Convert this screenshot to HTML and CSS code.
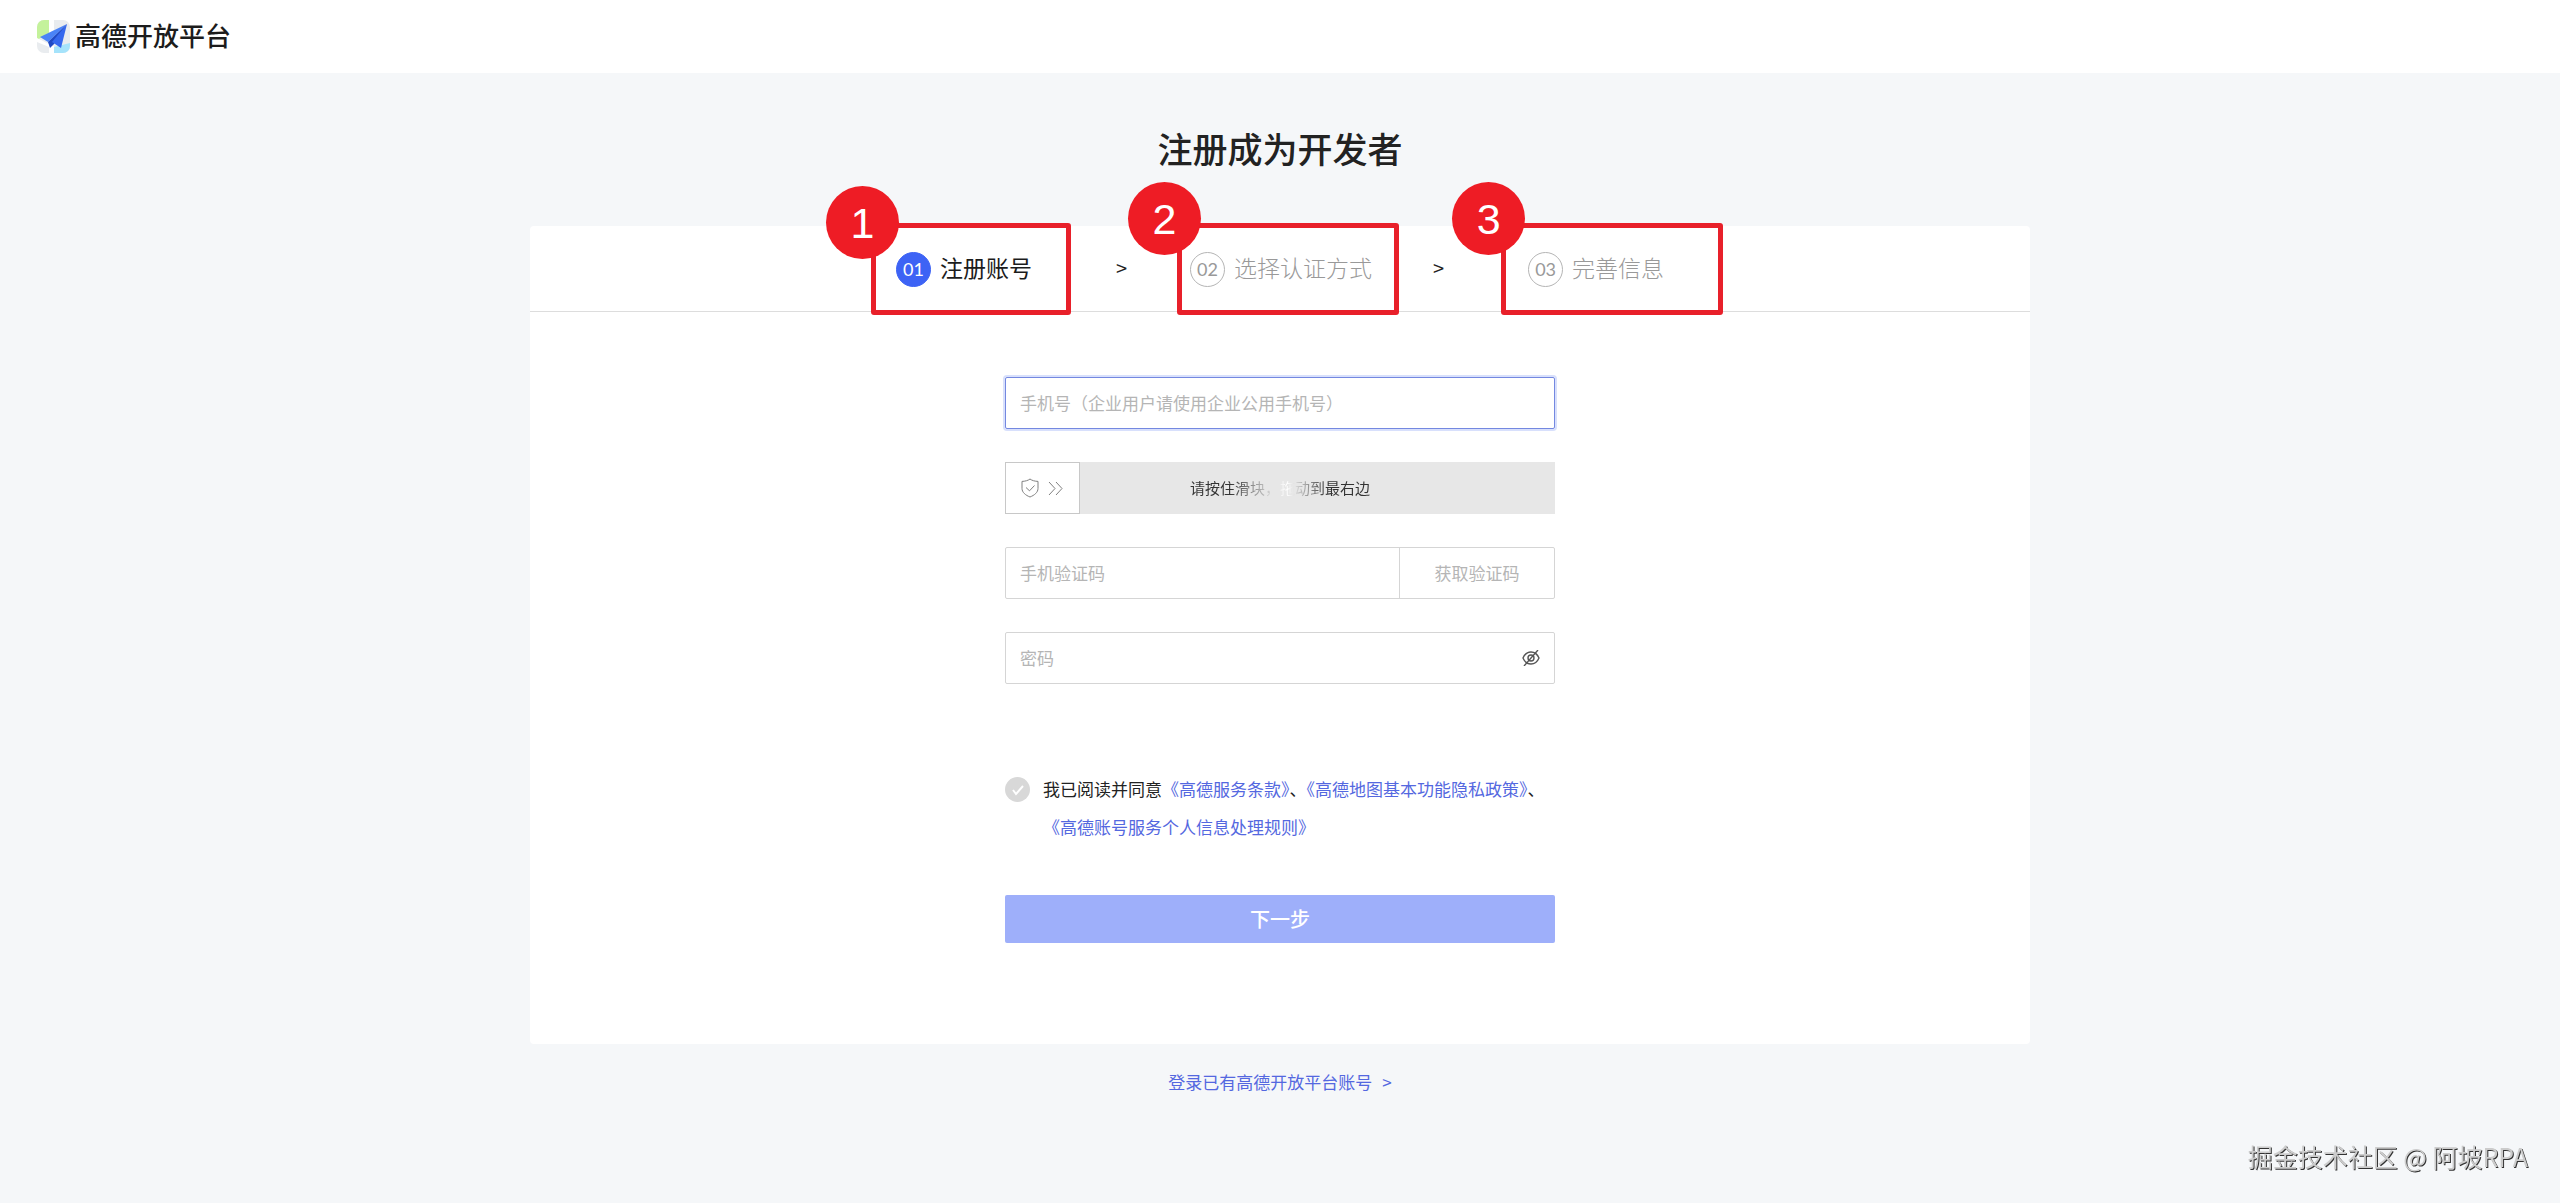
FILE: index.html
```html
<!DOCTYPE html>
<html lang="zh-CN">
<head>
    <meta charset="UTF-8">
    <meta name="viewport" content="width=device-width, initial-scale=1.0">
    <title>注册成为开发者 - 高德开放平台</title>
    <link rel="stylesheet" href="styles.css">
</head>
<body>
    <header class="header">
        <a class="logo" href="#">
            <svg width="33" height="33" viewBox="0 0 33 33" aria-hidden="true">
                <defs>
                    <clipPath id="tile"><rect width="33" height="33" rx="7"/></clipPath>
                </defs>
                <g clip-path="url(#tile)">
                    <rect width="33" height="33" fill="#e9ecef"/>
                    <path d="M0 0h12v13L0 20z" fill="#c4f29b"/>
                    <path d="M17 33V27l16-4v10z" fill="#a5e3fb"/>
                    <path d="M12 0h5v10l-5 3zM0 18l10 5 7 3v7h-5v-6L0 22z" fill="#fff"/>
                </g>
                <path d="M30 4L3 17l8 5z" fill="#4a83f7"/>
                <path d="M30 4L11 22l2 6 4-4z" fill="#1f49c4"/>
                <path d="M30 4L15 22l9 6z" fill="#3568ee"/>
            </svg>
            <span>高德开放平台</span>
        </a>
    </header>

    <main class="main">
        <h1 class="title">注册成为开发者</h1>

        <section class="card">
            <ol class="steps">
                <li class="step active">
                    <span class="step-num">01</span>
                    <span class="step-name">注册账号</span>
                    <span class="mark mark-1"><b class="badge">1</b></span>
                </li>
                <li class="arrow arrow-first" aria-hidden="true">&gt;</li>
                <li class="step">
                    <span class="step-num">02</span>
                    <span class="step-name">选择认证方式</span>
                    <span class="mark mark-2"><b class="badge">2</b></span>
                </li>
                <li class="arrow arrow-last" aria-hidden="true">&gt;</li>
                <li class="step">
                    <span class="step-num">03</span>
                    <span class="step-name">完善信息</span>
                    <span class="mark mark-3"><b class="badge">3</b></span>
                </li>
            </ol>

            <form class="form">
                <div class="field focused">
                    <input type="tel" aria-label="手机号" placeholder="手机号（企业用户请使用企业公用手机号）">
                </div>

                <div class="slider">
                    <input type="range" id="slide" min="0" max="100" value="0">
                    <label class="slider-text" for="slide">请按住滑块，拖动到最右边</label>
                    <svg class="slider-icon" width="42" height="20" viewBox="0 0 42 20" fill="none" stroke="#808080" aria-hidden="true">
                        <path d="M9 1c2 1.600 5 2.300 8 2.400v7c0 4-3.500 6.800-8 8.600-4.500-1.800-8-4.600-8-8.600v-7C4 3.300 7 2.600 9 1z"/>
                        <path d="M5 9.500l3.500 3.300 5-5.300"/>
                        <path d="M28 4l6 6.500-6 6.500M35 4l6 6.500-6 6.500"/>
                    </svg>
                </div>

                <div class="field">
                    <input type="text" aria-label="手机验证码" placeholder="手机验证码">
                    <button class="code-btn" type="button" disabled>获取验证码</button>
                </div>

                <div class="field">
                    <input type="password" aria-label="密码" placeholder="密码">
                    <button class="eye-btn" type="button" aria-label="显示密码">
                        <svg width="18" height="16" viewBox="0 0 18 16" fill="none" stroke="#555" stroke-width="1.400">
                            <path d="M1 8c1.500-3.500 4.500-6 8-6s6.500 2.500 8 6c-1.500 3.500-4.500 6-8 6s-6.500-2.500-8-6z"/>
                            <circle cx="9" cy="8" r="3"/>
                            <path d="M16 0L2 16"/>
                        </svg>
                    </button>
                </div>

                <div class="agree">
                    <input type="checkbox" id="agree">
                    <svg class="tick" width="12" height="12" viewBox="0 0 12 12" fill="none" stroke="#fff" stroke-width="2" aria-hidden="true">
                        <path d="M1 6l3 4 7-8"/>
                    </svg>
                    <p><label for="agree">我已阅读并同意</label><a href="#">《高德服务条款》</a>、<a href="#">《高德地图基本功能隐私政策》</a>、<br><a href="#">《高德账号服务个人信息处理规则》</a></p>
                </div>

                <button class="submit" type="button">下一步</button>
            </form>
        </section>

        <a class="login" href="#"><span>登录已有高德开放平台账号</span><span>&gt;</span></a>
    </main>

    <div class="watermark">掘金技术社区 @ 阿坡RPA</div>
</body>
</html>
```
FILE: styles.css
```css
* {
    box-sizing: border-box;
}
body {
    margin: 0;
    min-height: 100vh;
    background: #f5f7f9;
    color: #222222;
    font-family: "Noto Sans CJK SC", sans-serif;
    font-size: 17px;
}
a {
    color: #5468e0;
    text-decoration: none;
}
input, button {
    font-family: inherit;
    font-size: inherit;
}

/* header */
.header {
    display: flex;
    align-items: center;
    height: 73px;
    padding: 0 37px;
    background: #ffffff;
}
.logo {
    display: flex;
    align-items: center;
    gap: 5px;
    color: #1c1c1c;
    font-size: 26px;
    font-weight: 500;
    line-height: 30px;
}
.logo span {
    padding-bottom: 4px;
}

.main {
    display: flex;
    flex-direction: column;
    align-items: center;
}
.title {
    margin: 49px 0 53px;
    font-size: 35px;
    font-weight: 500;
    line-height: 51px;
}
.card {
    width: 100%;
    max-width: 1500px;
    padding-bottom: 101px;
    background: #ffffff;
    border-radius: 4px;
}

/* steps */
.steps {
    display: flex;
    justify-content: center;
    align-items: center;
    margin: 0;
    padding: 26px 0 24px;
    border-bottom: 1px solid #dddddd;
    list-style: none;
    line-height: 35px;
}
.step {
    position: relative;
    display: flex;
    align-items: center;
    gap: 9px;
    color: #999999;
    font-size: 23px;
    font-weight: 300;
}
.step-num {
    width: 35px;
    height: 35px;
    border: 1px solid #b5b5b5;
    border-radius: 50%;
    font-family: Lato, sans-serif;
    font-size: 18px;
    font-weight: normal;
    line-height: 33px;
    text-align: center;
}
.step-name {
    padding-bottom: 4px;
    line-height: 31px;
}
.step.active {
    color: #1c1c1c;
    font-weight: normal;
}
.step.active .step-num {
    background: #3d63f5;
    border-color: #3d63f5;
    color: #ffffff;
}
.arrow {
    font-size: 20px;
    line-height: 31px;
    padding-bottom: 4px;
}
.arrow-first {
    margin: 0 63px 0 84px;
}
.arrow-last {
    margin: 0 84px 0 61px;
}

/* red callouts over the steps */
.mark {
    position: absolute;
    top: -29px;
    bottom: -28px;
    border: 5px solid #e8202a;
    border-radius: 3px;
}
.mark-1 {
    left: -25px;
    right: -39px;
}
.mark-2 {
    left: -13px;
    right: -27px;
}
.mark-3 {
    left: -27px;
    right: -59px;
}
.badge {
    position: absolute;
    left: -50px;
    top: -42px;
    width: 73px;
    height: 73px;
    border-radius: 50%;
    background: #ee1c25;
    color: #ffffff;
    font-family: "Liberation Sans", sans-serif;
    font-size: 43px;
    font-weight: normal;
    line-height: 75px;
    text-align: center;
}
.mark-2 .badge, .mark-3 .badge {
    left: -54px;
    top: -46px;
}

/* form */
.form {
    display: flex;
    flex-direction: column;
    gap: 33px;
    width: 100%;
    max-width: 550px;
    margin: 0 auto;
    padding-top: 65px;
}
.field {
    display: flex;
    height: 52px;
    border: 1px solid #d5d5d5;
    border-radius: 2px;
}
.field input {
    flex: 1;
    min-width: 0;
    padding: 0 14px 2px;
    border: none;
    outline: none;
    background: none;
}
.field input::placeholder {
    color: #b5b5b5;
}
.field.focused {
    border-color: #7488e0;
    box-shadow: 0 0 0 2px #d8e0fc;
}
.code-btn {
    width: 155px;
    padding: 0 0 2px;
    border: none;
    border-left: 1px solid #d5d5d5;
    background: none;
    color: #b5b5b5;
}
.eye-btn {
    display: flex;
    align-items: center;
    padding: 0 14px;
    border: none;
    background: none;
}

/* the range, its label and the icon share one grid cell */
.slider {
    display: grid;
    align-items: center;
    height: 52px;
}
.slider > * {
    grid-area: 1 / 1;
}
.slider input {
    appearance: none;
    width: 100%;
    height: 52px;
    margin: 0;
    background: #e7e7e7;
}
.slider input::-webkit-slider-thumb {
    appearance: none;
    width: 75px;
    height: 52px;
    border: 1px solid #c8c8c8;
    background: #ffffff;
}
.slider-text {
    justify-self: center;
    padding-bottom: 2px;
    background: linear-gradient(to right, #333333 22%, #e9e9e9 48%, #ffffff 54%, #e0e0e0 58%, #333333 76%);
    background-clip: text;
    color: transparent;
    font-size: 15px;
    pointer-events: none;
}
.slider-icon {
    margin-left: 16px;
    pointer-events: none;
}

.agree {
    display: grid;
    grid-template-columns: 25px 1fr;
    column-gap: 13px;
    margin-top: 53px;
    line-height: 38px;
}
.agree input {
    grid-area: 1 / 1;
    appearance: none;
    width: 25px;
    height: 25px;
    margin: 7px 0;
    border-radius: 50%;
    background: #d8d8d8;
}
.agree .tick {
    grid-area: 1 / 1;
    justify-self: center;
    margin-top: 14px;
    pointer-events: none;
}
.agree p {
    margin: 0;
    white-space: nowrap;
}
.submit {
    height: 48px;
    margin-top: 16px;
    padding: 0 0 2px;
    border: none;
    border-radius: 2px;
    background: #9eaffa;
    color: #ffffff;
    font-size: 20px;
    font-weight: 500;
}

.login {
    display: flex;
    gap: 10px;
    margin-top: 25px;
    line-height: 26px;
}
.watermark {
    position: fixed;
    right: 32px;
    bottom: 28px;
    color: #cccccc;
    font-size: 25px;
    line-height: 38px;
    text-shadow: 1px 1px 0 #333333;
}
```
